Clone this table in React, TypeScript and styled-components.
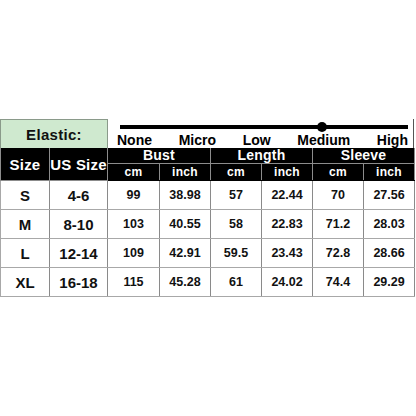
import styled, { createGlobalStyle } from "styled-components";

const GlobalStyle = createGlobalStyle`
  body {
    margin: 0;
    background: #fff;
    font-family: "Liberation Sans", Arial, sans-serif;
  }
`;

const levels = ["None", "Micro", "Low", "Medium", "High"];
const colWidths = [49, 58, 52, 51, 51, 51, 51, 51];
const units = ["cm", "inch", "cm", "inch", "cm", "inch"];

const rows = [
  ["S", "4-6", "99", "38.98", "57", "22.44", "70", "27.56"],
  ["M", "8-10", "103", "40.55", "58", "22.83", "71.2", "28.03"],
  ["L", "12-14", "109", "42.91", "59.5", "23.43", "72.8", "28.66"],
  ["XL", "16-18", "115", "45.28", "61", "24.02", "74.4", "29.29"],
];

export default function App() {
  return (
    <>
      <GlobalStyle />
      <Page>
        <ElasticRow>
          <ElasticLabel>Elastic:</ElasticLabel>
          <Scale>
            <Track>
              <Knob />
            </Track>
            <Levels>
              {levels.map((l) => (
                <span key={l}>{l}</span>
              ))}
            </Levels>
          </Scale>
        </ElasticRow>
        <Table>
          <colgroup>
            {colWidths.map((w, i) => (
              <Col key={i} $w={w} />
            ))}
          </colgroup>
          <thead>
            <tr>
              <HeadCell rowSpan={2} $big>
                Size
              </HeadCell>
              <HeadCell rowSpan={2} $big>
                US Size
              </HeadCell>
              <HeadCell colSpan={2}>Bust</HeadCell>
              <HeadCell colSpan={2}>Length</HeadCell>
              <HeadCell colSpan={2}>Sleeve</HeadCell>
            </tr>
            <tr>
              {units.map((u, i) => (
                <SubHeadCell key={i}>{u}</SubHeadCell>
              ))}
            </tr>
          </thead>
          <tbody>
            {rows.map((r) => (
              <tr key={r[0]}>
                {r.map((v, i) => (
                  <Cell key={i} $big={i < 2}>
                    {v}
                  </Cell>
                ))}
              </tr>
            ))}
          </tbody>
        </Table>
      </Page>
    </>
  );
}

const Page = styled.div`
  padding-top: 119px;
  width: 414px;
`;

const ElasticRow = styled.div`
  display: grid;
  grid-template-columns: 108px 1fr;
  height: 29px;
  border-right: 1px solid #555;
`;

const ElasticLabel = styled.div`
  display: flex;
  align-items: center;
  justify-content: center;
  background: #cfe9cf;
  border: 1px solid #8a9a8a;
  border-bottom: none;
  font-size: 15px;
  font-weight: bold;
  letter-spacing: 0.3px;
  color: #111;
`;

const Scale = styled.div`
  display: flex;
  flex-direction: column;
  justify-content: space-between;
  padding: 6px 5px 0 9px;
`;

const Track = styled.div`
  position: relative;
  height: 4px;
  margin-left: 3px;
  background: #000;
`;

const Knob = styled.span`
  position: absolute;
  left: 197px;
  top: -3px;
  width: 10px;
  height: 10px;
  border-radius: 50%;
  background: #000;
`;

const Levels = styled.div`
  display: flex;
  justify-content: space-between;
  font-size: 14px;
  font-weight: bold;
  line-height: 16px;
  color: #000;
`;

const Table = styled.table`
  width: 414px;
  border-collapse: collapse;
  table-layout: fixed;
  border-left: 1px solid #333;
  border-bottom: 1px solid #333;
`;

const Col = styled.col<{ $w: number }>`
  width: ${(p) => p.$w}px;
`;

const HeadCell = styled.th<{ $big?: boolean }>`
  background: #000;
  color: #fff;
  font-size: ${(p) => (p.$big ? "15px" : "14px")};
  font-weight: bold;
  height: 15px;
  padding: 0;
  line-height: 15px;
  border: 1px solid #8c8c8c;
  border-top: none;
  text-align: center;
  letter-spacing: 0.2px;
`;

const SubHeadCell = styled.th`
  background: #000;
  color: #fff;
  font-size: 12px;
  font-weight: bold;
  height: 16px;
  padding: 0;
  line-height: 16px;
  border: 1px solid #8c8c8c;
  border-bottom-color: #000;
  text-align: center;
  letter-spacing: 0.3px;
`;

const Cell = styled.td<{ $big?: boolean }>`
  height: 28px;
  padding: 0;
  text-align: center;
  font-size: ${(p) => (p.$big ? "15px" : "12.5px")};
  font-weight: bold;
  color: #111;
  border: 1px solid #a8a8a8;
  border-right-color: #8a8a8a;
`;
